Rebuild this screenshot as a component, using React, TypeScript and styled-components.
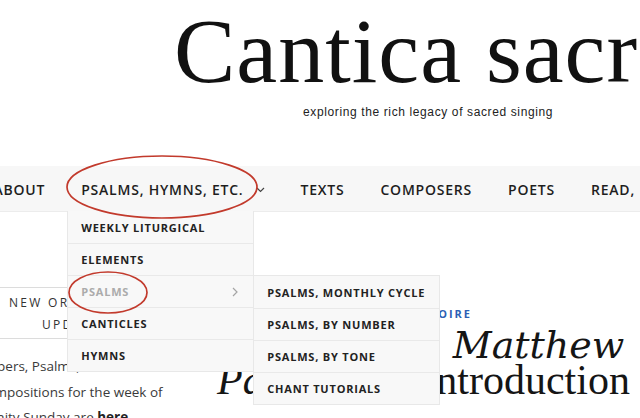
import styled, { createGlobalStyle } from "styled-components";

const GlobalStyle = createGlobalStyle`
  html, body { margin: 0; padding: 0; background: #fff; }
  body { overflow: hidden; font-family: "Open Sans", "Liberation Sans", sans-serif; }
`;

const Page = styled.div`
  position: relative;
  width: 640px;
  height: 418px;
  overflow: hidden;
  background: #fff;
`;

const Header = styled.header`
  display: flex;
  flex-direction: column;
  padding-top: 5px;
`;

const Title = styled.h1`
  margin: 0;
  padding-left: 174px;
  font-family: "Liberation Serif", serif;
  font-weight: 400;
  font-size: 92px;
  line-height: 92px;
  letter-spacing: 1px;
  color: #111;
  white-space: nowrap;
`;

const Tagline = styled.p`
  margin: 8px 0 0;
  padding-left: 303px;
  font-family: "Liberation Sans", Arial, sans-serif;
  font-size: 12px;
  line-height: 14px;
  letter-spacing: 0.62px;
  color: #222;
  white-space: nowrap;
`;

const NavBar = styled.nav`
  position: relative;
  z-index: 10;
  margin-top: 47px;
  height: 45px;
  background: #f7f7f7;
  border-bottom: 1px solid #ececec;
`;

const NavList = styled.ul`
  display: flex;
  align-items: stretch;
  gap: 8px;
  height: 100%;
  margin: 0 0 0 -20.5px;
  padding: 0;
  list-style: none;
  white-space: nowrap;
`;

const NavItem = styled.li`
  position: relative;
  display: flex;
  align-items: center;
  gap: 12px;
  padding: 2px 14px 0;
  font-size: 14px;
  font-weight: 600;
  letter-spacing: 0.78px;
  color: #1e1e1e;
`;

const Dropdown = styled.ul`
  position: absolute;
  top: 100%;
  left: 0;
  width: 187px;
  margin: 0;
  padding: 0;
  list-style: none;
  background: #f8f8f8;
  border: 1px solid #e8e8e8;
  border-top: none;
  box-sizing: border-box;
`;

const SubMenu = styled(Dropdown)`
  top: -1px;
  left: 100%;
  width: 187px;
  border-top: 1px solid #e8e8e8;
`;

const DropRow = styled.li<{ $muted?: boolean; $first?: boolean }>`
  position: relative;
  display: flex;
  align-items: center;
  justify-content: space-between;
  height: 32px;
  padding: 0 15px 0 13px;
  box-sizing: border-box;
  border-top: ${(p) => (p.$first ? "none" : "1px solid #e9e9e9")};
  font-size: 11px;
  font-weight: 700;
  letter-spacing: 0.8px;
  color: ${(p) => (p.$muted ? "#ababab" : "#222")};
`;

const Main = styled.div`
  display: flex;
  gap: 30px;
  margin-left: -20px;
`;

const Sidebar = styled.aside`
  flex: 0 0 207px;
  padding-top: 75px;
`;

const Widget = styled.div`
  height: 52px;
  box-sizing: border-box;
  padding-top: 4px;
  border: 1px solid #dcdcdc;
  font-size: 12px;
  line-height: 22px;
  letter-spacing: 2.3px;
  color: #333;
`;

const WidgetLine = styled.div<{ $indent: number }>`
  padding-left: ${(p) => p.$indent}px;
  white-space: nowrap;
`;

const BodyText = styled.p`
  margin: 15px 0 0;
  font-size: 13.5px;
  line-height: 25.5px;
  color: #3a3a3a;
  white-space: nowrap;
`;

const TextLine = styled.span<{ $indent?: number }>`
  display: block;
  margin-left: ${(p) => p.$indent ?? 0}px;
  b { font-weight: 700; color: #222; }
`;

const Article = styled.article`
  flex: 1;
  padding-top: 94px;
  white-space: nowrap;
`;

const Category = styled.div`
  width: 255px;
  text-align: right;
  font-size: 11px;
  line-height: 16px;
  font-weight: 700;
  letter-spacing: 2px;
  color: #2d5fb4;
`;

const Heading = styled.h2`
  margin: 5px 0 0;
  font-family: "Liberation Serif", serif;
  font-weight: 400;
  font-size: 42px;
  line-height: 35px;
  color: #151515;
`;

const HeadLine = styled.span`
  display: block;
`;

const WideItalic = styled.em`
  font-family: "DejaVu Serif", serif;
  font-style: italic;
  font-size: 38px;
`;

const Overlay = styled.svg`
  position: absolute;
  inset: 0;
  z-index: 20;
  pointer-events: none;
`;

const Chevron = () => (
  <svg width="9" height="6" viewBox="0 0 9 6">
    <polyline points="1,1 4.5,4.5 8,1" fill="none" stroke="#444" strokeWidth="1.2" />
  </svg>
);

const Caret = () => (
  <svg width="6" height="10" viewBox="0 0 6 10">
    <polyline points="1,1 5,5 1,9" fill="none" stroke="#a5a5a5" strokeWidth="1.2" />
  </svg>
);

const psalmsSub = ["PSALMS, MONTHLY CYCLE", "PSALMS, BY NUMBER", "PSALMS, BY TONE", "CHANT TUTORIALS"];

export default function App() {
  return (
    <Page>
      <GlobalStyle />
      <Header>
        <Title>Cantica sacra</Title>
        <Tagline>exploring the rich legacy of sacred singing</Tagline>
      </Header>

      <NavBar>
        <NavList>
          <NavItem>ABOUT</NavItem>
          <NavItem>
            PSALMS, HYMNS, ETC.
            <Chevron />
            <Dropdown>
              <DropRow $first>WEEKLY LITURGICAL</DropRow>
              <DropRow>ELEMENTS</DropRow>
              <DropRow $muted>
                PSALMS
                <Caret />
                <SubMenu>
                  {psalmsSub.map((s, i) => (
                    <DropRow key={s} $first={i === 0}>{s}</DropRow>
                  ))}
                </SubMenu>
              </DropRow>
              <DropRow>CANTICLES</DropRow>
              <DropRow>HYMNS</DropRow>
            </Dropdown>
          </NavItem>
          <NavItem>TEXTS</NavItem>
          <NavItem>COMPOSERS</NavItem>
          <NavItem>POETS</NavItem>
          <NavItem>READ, LISTEN</NavItem>
        </NavList>
      </NavBar>

      <Main>
        <Sidebar>
          <Widget>
            <WidgetLine $indent={28}>NEW OR</WidgetLine>
            <WidgetLine $indent={61}>UPDATED</WidgetLine>
          </Widget>
          <BodyText>
            <TextLine $indent={-5}>Vespers, Psalms, and choral</TextLine>
            <TextLine>compositions for the week of</TextLine>
            <TextLine>Trinity Sunday are <b>here</b>.</TextLine>
          </BodyText>
        </Sidebar>
        <Article>
          <Category>ARTICLES, CHORAL REPERTOIRE</Category>
          <Heading>
            <HeadLine>In Bach’s <WideItalic>St. Matthew</WideItalic></HeadLine>
            <HeadLine><i>Passion</i>: an Introduction</HeadLine>
          </Heading>
        </Article>
      </Main>

      <Overlay width="640" height="418" viewBox="0 0 640 418">
        <ellipse cx="162" cy="187" rx="95" ry="31" fill="none" stroke="#c23a2c" strokeWidth="1.7" />
        <ellipse cx="108" cy="292.5" rx="39" ry="20.5" fill="none" stroke="#c23a2c" strokeWidth="1.7" />
      </Overlay>
    </Page>
  );
}
